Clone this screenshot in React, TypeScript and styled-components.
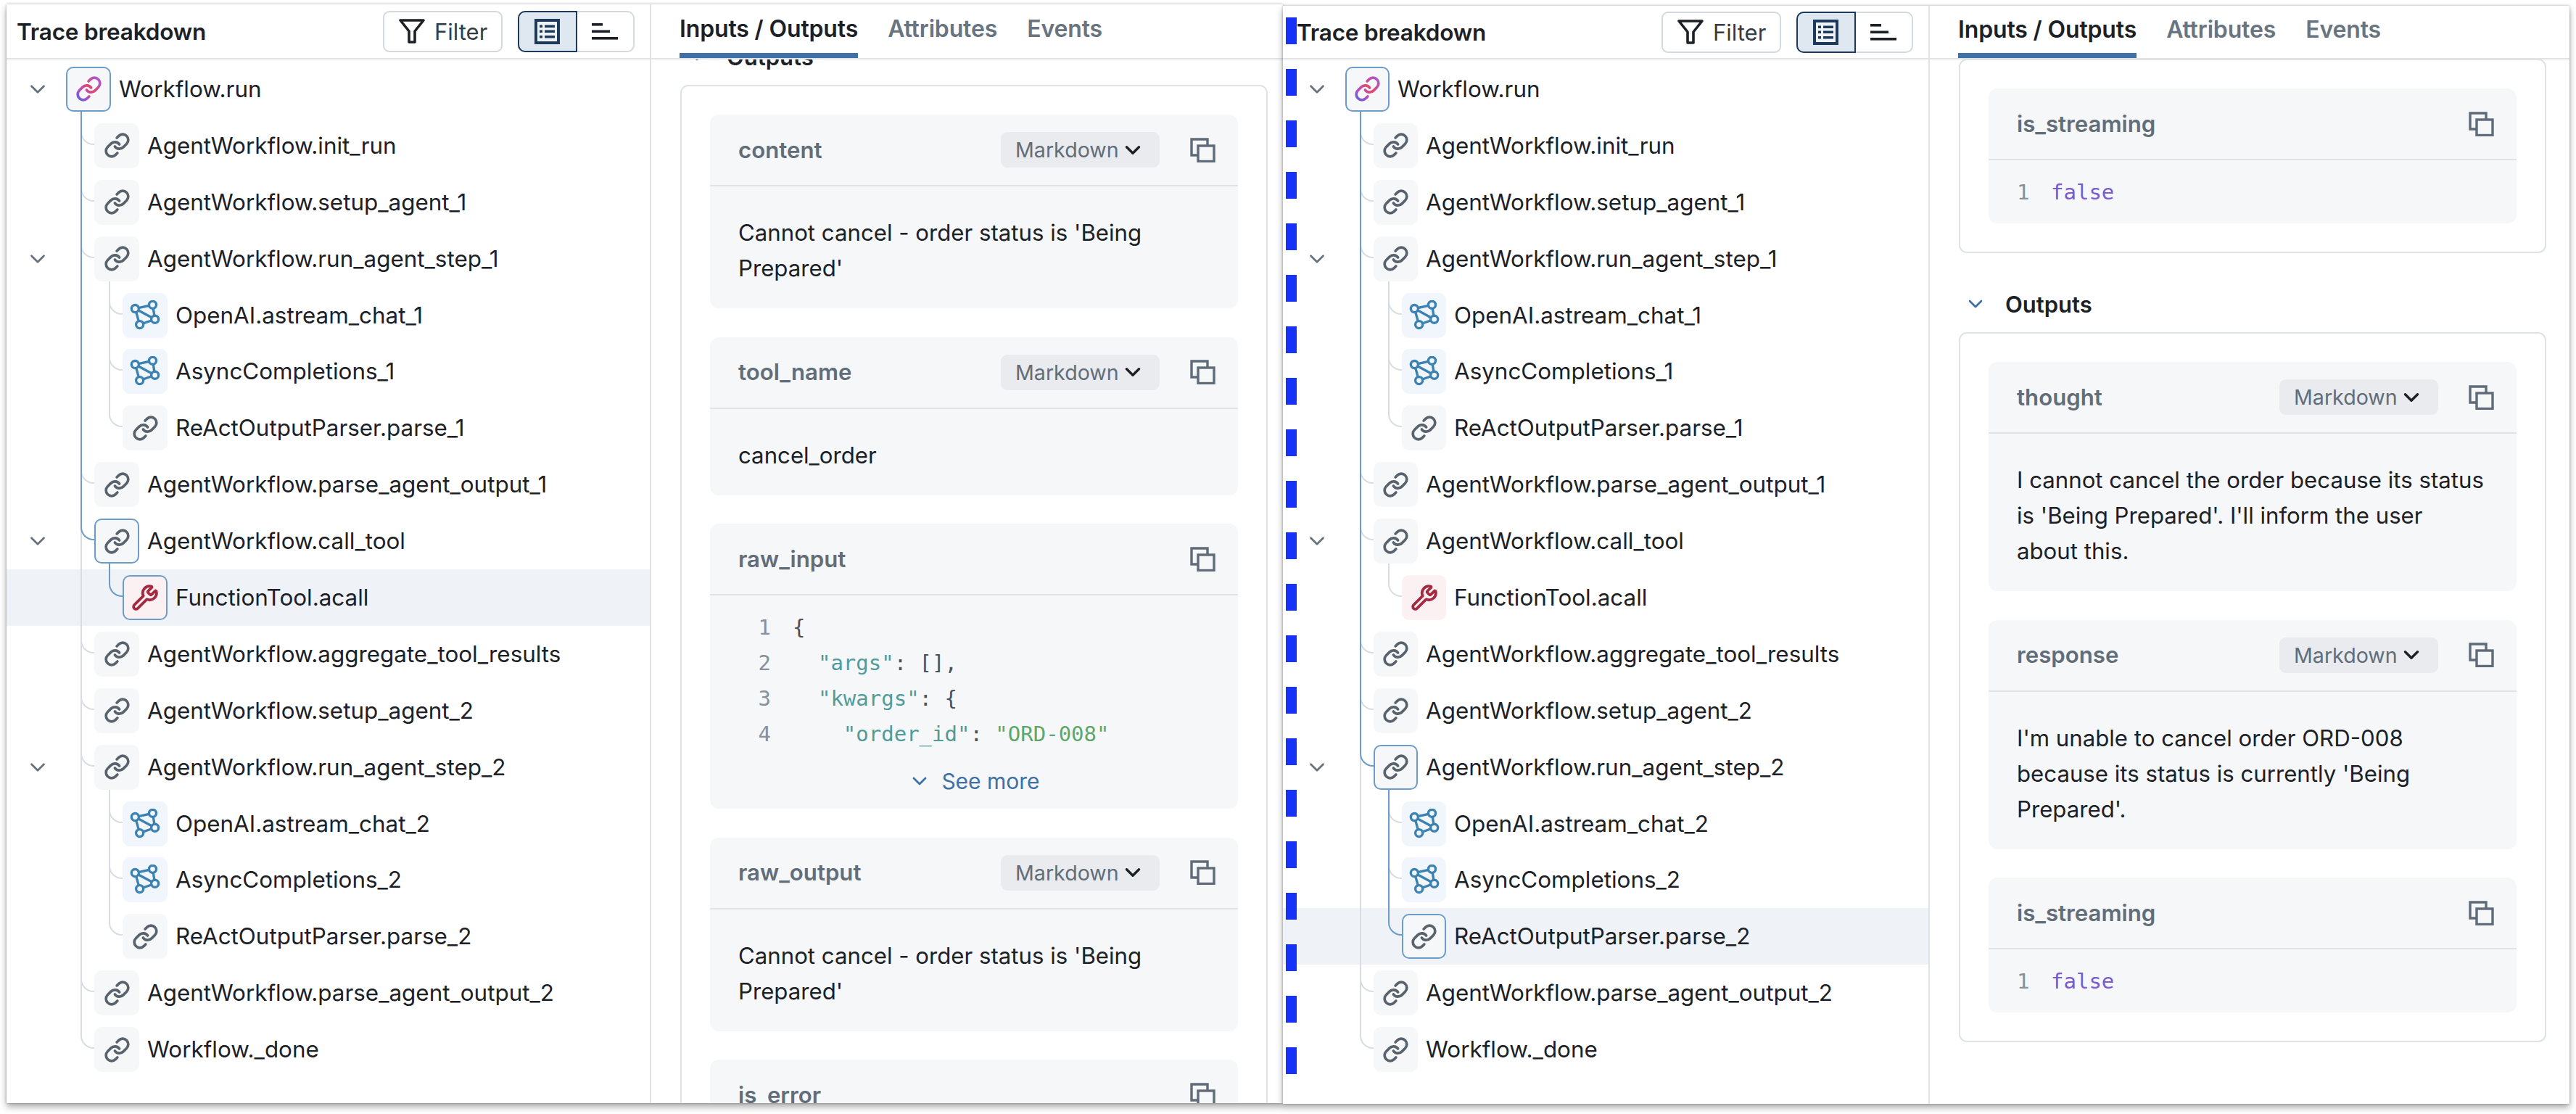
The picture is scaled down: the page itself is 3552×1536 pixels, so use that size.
import React from "react";
import styled, { createGlobalStyle } from "styled-components";
import { ChevronDown, Link as LinkIcon, Wrench } from "lucide-react";

const BLUE_LINE = "#6c9dca";
const GRAY_LINE = "#d9dde1";
const BORDER = "#dfe3e6";
const INK = "#1b2126";
const MUTED = "#616d79";
const FONT = `Inter, "Liberation Sans", sans-serif`;
const MONO = `"DejaVu Sans Mono", "Liberation Mono", monospace`;

const Global = createGlobalStyle`
  html, body { margin: 0; padding: 0; background: #fff; }
  body { font-family: ${FONT}; color: ${INK}; }
  * { box-sizing: border-box; }
`;

const Page = styled.div`
  position: relative;
  display: flex;
  align-items: flex-start;
  width: 3552px;
  height: 1536px;
  padding: 6px 0 0 9px;
  overflow: hidden;
  background: #fff;
`;

const DashOverlay = styled.div`
  position: absolute;
  z-index: 5;
  left: 1773px;
  top: 24px;
  width: 15px;
  height: 1459px;
  background: repeating-linear-gradient(to bottom, #1732f7 0, #1732f7 37px, transparent 37px, transparent 71px);
`;

const Window = styled.div<{ $w: number; $h: number; $top: number }>`
  position: relative;
  display: flex;
  flex: none;
  width: ${(p) => p.$w}px;
  height: ${(p) => p.$h}px;
  margin-top: ${(p) => p.$top}px;
  overflow: hidden;
  background: #fff;
  box-shadow: 0 0 3px rgba(0, 0, 0, 0.28), 0 5px 9px rgba(0, 0, 0, 0.34);
`;

const TracePane = styled.section<{ $w: number }>`
  flex: none;
  width: ${(p) => p.$w}px;
  border-right: 2px solid ${BORDER};
`;

const TraceHeader = styled.header<{ $h: number; $pad: number }>`
  display: flex;
  align-items: center;
  height: ${(p) => p.$h}px;
  padding: 0 21px 0 ${(p) => p.$pad}px;
  border-bottom: 2px solid ${BORDER};
  gap: 21px;
`;

const TraceTitle = styled.h2`
  flex: 1;
  margin: 0;
  font-size: 31.5px;
  font-weight: 600;
  letter-spacing: -0.2px;
`;

const FilterButton = styled.button`
  display: flex;
  align-items: center;
  gap: 13px;
  width: 165px;
  height: 57px;
  padding: 0 0 0 20px;
  border: 2px solid #d4d9de;
  border-radius: 9px;
  background: #fff;
  color: #333c44;
  font: 400 31px ${FONT};
`;

const Toggle = styled.div`
  display: flex;
  width: 161px;
  height: 57px;
  border: 2px solid #d4d9de;
  border-radius: 10px;
`;

const ToggleOption = styled.div<{ $on?: boolean }>`
  display: flex;
  align-items: center;
  justify-content: center;
  flex: 1;
  margin: ${(p) => (p.$on ? "-2px 0 -2px -2px" : "0")};
  border: ${(p) => (p.$on ? "2px solid #1d3a5c" : "none")};
  border-radius: ${(p) => (p.$on ? "10px 0 0 10px" : "0")};
  background: ${(p) => (p.$on ? "#dfe8f1" : "transparent")};
`;

const Tree = styled.div`
  padding-top: 2px;
`;

const Row = styled.div<{ $active: boolean }>`
  position: relative;
  display: flex;
  align-items: center;
  height: 77.9px;
  background: ${(p) => (p.$active ? "#eff2f7" : "transparent")};
`;

const CaretCell = styled.div<{ $w: number }>`
  display: flex;
  flex: none;
  align-items: center;
  justify-content: center;
  width: ${(p) => p.$w}px;
  padding-left: ${(p) => p.$w - 78}px;
  color: #66717c;
`;

const Indent = styled.div<{ $depth: number }>`
  flex: none;
  width: ${(p) => p.$depth * 39}px;
`;

const IconBox = styled.div<{ $kind: string; $on: boolean; $size: number }>`
  position: relative;
  z-index: 3;
  display: flex;
  flex: none;
  align-items: center;
  justify-content: center;
  width: ${(p) => p.$size}px;
  height: 62px;
  border: 2px solid ${(p) => (p.$on ? BLUE_LINE : "transparent")};
  border-radius: 10px;
  background: ${(p) => (p.$kind === "net" ? "#f0f6fb" : p.$kind === "tool" ? "#fbf0f2" : "#f5f7f9")};
  color: ${(p) => (p.$kind === "net" ? "#3b82b3" : p.$kind === "tool" ? "#a52a3f" : "#59636d")};
`;

const RowLabel = styled.span`
  margin-left: 11px;
  font-size: 31.4px;
  white-space: nowrap;
`;

const TrunkLine = styled.i<{ $x: number; $top: number; $blue: boolean }>`
  position: absolute;
  z-index: ${(p) => (p.$blue ? 2 : 1)};
  left: ${(p) => p.$x}px;
  top: ${(p) => p.$top}px;
  bottom: 0;
  width: 2px;
  background: ${(p) => (p.$blue ? BLUE_LINE : GRAY_LINE)};
`;

const Elbow = styled.i<{ $x: number; $blue: boolean }>`
  position: absolute;
  z-index: ${(p) => (p.$blue ? 2 : 1)};
  left: ${(p) => p.$x}px;
  top: 0;
  width: 20px;
  height: 38px;
  border-left: 2px solid ${(p) => (p.$blue ? BLUE_LINE : GRAY_LINE)};
  border-bottom: 2px solid ${(p) => (p.$blue ? BLUE_LINE : GRAY_LINE)};
  border-bottom-left-radius: 18px;
`;

const DetailPane = styled.section`
  flex: 1;
  min-width: 0;
  display: flex;
  flex-direction: column;
  height: 100%;
`;

const TabBar = styled.nav<{ $h: number }>`
  display: flex;
  flex: none;
  gap: 41px;
  height: ${(p) => p.$h}px;
  padding-left: 39px;
  border-bottom: 2px solid ${BORDER};
`;

const Tab = styled.div<{ $on?: boolean }>`
  display: flex;
  align-items: center;
  border-bottom: 7px solid ${(p) => (p.$on ? "#3f70a6" : "transparent")};
  color: ${(p) => (p.$on ? INK : "#68747f")};
  font-size: 32px;
  font-weight: 600;
  letter-spacing: -0.15px;
`;

const Scroller = styled.div`
  flex: 1;
  min-height: 0;
  overflow: hidden;
  padding-left: 40px;
`;

const SectionHead = styled.div<{ $first?: boolean; $gap?: number }>`
  display: flex;
  align-items: center;
  height: 78px;
  margin-top: ${(p) => (p.$first ? -43 : p.$gap ?? 31)}px;
  padding-left: 7px;
  font-size: 31px;
  font-weight: 600;
  color: ${INK};
`;

const SectionCaret = styled.span`
  display: flex;
  width: 57px;
  color: #3f70a6;
`;

const Card = styled.div<{ $offset?: number }>`
  display: flex;
  flex-direction: column;
  gap: 39.5px;
  width: 810px;
  margin-top: ${(p) => p.$offset ?? 0}px;
  padding: 39px 39px;
  border: 2px solid ${BORDER};
  border-radius: 11px;
`;

const Block = styled.article`
  flex: none;
  border-radius: 12px;
  background: #f5f7f9;
`;

const BlockHead = styled.div`
  display: flex;
  align-items: center;
  height: 99px;
  padding: 0 31px 0 39px;
  border-bottom: 2px solid ${BORDER};
`;

const BlockName = styled.h3`
  flex: 1;
  margin: 0;
  color: ${MUTED};
  font-size: 31.2px;
  font-weight: 600;
`;

const FormatPill = styled.div`
  display: flex;
  align-items: center;
  gap: 2px;
  width: 219px;
  height: 49px;
  margin-right: 42px;
  padding-left: 20px;
  border-radius: 9px;
  background: #e9ebee;
  color: ${MUTED};
  font-size: 28.6px;
`;

const PillCaret = styled.span`
  display: flex;
  color: #1b2126;
`;

const Prose = styled.p`
  margin: 0;
  padding: 40px 39px 30px;
  font-size: 31.2px;
  line-height: 49px;
  color: ${INK};
`;

const CodeArea = styled.div`
  padding: 20px 0 18px 39px;
  font: 400 29px/49px ${MONO};
`;

const CodeLine = styled.div`
  display: flex;
  white-space: pre;
`;

const LineNo = styled.span<{ $w: number }>`
  flex: none;
  width: ${(p) => p.$w}px;
  margin-right: 30px;
  color: #87919a;
  text-align: right;
`;

const Punct = styled.span`
  color: #4a535b;
`;
const Key = styled.span`
  color: #4f9c9a;
`;
const Str = styled.span`
  color: #5ea76a;
`;
const Bool = styled.span`
  color: #7a5ad0;
`;

const SeeMore = styled.div`
  display: flex;
  align-items: center;
  justify-content: center;
  gap: 14px;
  height: 49px;
  margin: -3px 0 14px;
  color: #3f70a6;
  font-size: 30px;
`;

type Kind = "link" | "net" | "tool" | "root";
type RowData = { label: string; depth: number; kind: Kind; open?: boolean };

const rows: RowData[] = [
  { label: "Workflow.run", depth: 0, kind: "root", open: true },
  { label: "AgentWorkflow.init_run", depth: 1, kind: "link" },
  { label: "AgentWorkflow.setup_agent_1", depth: 1, kind: "link" },
  { label: "AgentWorkflow.run_agent_step_1", depth: 1, kind: "link", open: true },
  { label: "OpenAI.astream_chat_1", depth: 2, kind: "net" },
  { label: "AsyncCompletions_1", depth: 2, kind: "net" },
  { label: "ReActOutputParser.parse_1", depth: 2, kind: "link" },
  { label: "AgentWorkflow.parse_agent_output_1", depth: 1, kind: "link" },
  { label: "AgentWorkflow.call_tool", depth: 1, kind: "link", open: true },
  { label: "FunctionTool.acall", depth: 2, kind: "tool" },
  { label: "AgentWorkflow.aggregate_tool_results", depth: 1, kind: "link" },
  { label: "AgentWorkflow.setup_agent_2", depth: 1, kind: "link" },
  { label: "AgentWorkflow.run_agent_step_2", depth: 1, kind: "link", open: true },
  { label: "OpenAI.astream_chat_2", depth: 2, kind: "net" },
  { label: "AsyncCompletions_2", depth: 2, kind: "net" },
  { label: "ReActOutputParser.parse_2", depth: 2, kind: "link" },
  { label: "AgentWorkflow.parse_agent_output_2", depth: 1, kind: "link" },
  { label: "Workflow._done", depth: 1, kind: "link" },
];

const lastSibling = (i: number) => {
  const d = rows[i].depth;
  const next = rows[i + 1];
  if (d === 2) return !next || next.depth < 2;
  return !rows.slice(i + 1).some((r) => r.depth === 1);
};

const parentOf = (i: number) => {
  for (let j = i - 1; j >= 0; j--) if (rows[j].depth < rows[i].depth) return j;
  return -1;
};

const NetworkGlyph = () => (
  <svg width="42" height="42" viewBox="-20 -20 40 40" fill="none" stroke="currentColor" strokeWidth="3.2">
    <path d="M-13-9 10-14 13 5-7 12Z M-13-9 13 5" />
    <circle cx="-13" cy="-9" r="4.8" fill="#f0f6fb" />
    <circle cx="10" cy="-14" r="4.8" fill="#f0f6fb" />
    <circle cx="13" cy="5" r="4.8" fill="#f0f6fb" />
    <circle cx="-7" cy="12" r="4.8" fill="#f0f6fb" />
  </svg>
);

const GradientLink = ({ id }: { id: string }) => (
  <svg width="37" height="37" viewBox="0 0 24 24" fill="none" stroke={`url(#${id})`} strokeWidth="2.4" strokeLinecap="round" strokeLinejoin="round">
    <defs>
      <linearGradient id={id} gradientUnits="userSpaceOnUse" x1="2" y1="22" x2="22" y2="2">
        <stop offset="0" stopColor="#5a63dd" />
        <stop offset="0.25" stopColor="#b04fc8" />
        <stop offset="0.55" stopColor="#e2486e" />
        <stop offset="1" stopColor="#a35ae0" />
      </linearGradient>
    </defs>
    <path d="M10 13a5 5 0 0 0 7.54.54l3-3a5 5 0 0 0-7.07-7.07l-1.72 1.71" />
    <path d="M14 11a5 5 0 0 0-7.54-.54l-3 3a5 5 0 0 0 7.07 7.07l1.71-1.71" />
  </svg>
);

const FunnelGlyph = () => (
  <svg width="36" height="36" viewBox="0 0 36 36" fill="none" stroke="#1b2126" strokeWidth="3.6" strokeLinejoin="round">
    <path d="M2 3h32L22 18v15h-8V18Z" />
  </svg>
);

const ListGlyph = () => (
  <svg width="35" height="35" viewBox="0 0 35 35">
    <rect x="2" y="2" width="31" height="31" fill="#eef3f8" stroke="#1d3a5c" strokeWidth="4" />
    <g fill="#1d3a5c">
      <rect x="7" y="8.5" width="4" height="3.5" />
      <rect x="7" y="15.5" width="4" height="3.5" />
      <rect x="7" y="23" width="4" height="3.5" />
      <rect x="14" y="8.5" width="14" height="3.5" />
      <rect x="14" y="15.5" width="14" height="3.5" />
      <rect x="14" y="23" width="14" height="3.5" />
    </g>
  </svg>
);

const GanttGlyph = () => (
  <svg width="36" height="26" viewBox="0 0 36 26" fill="#1b2126">
    <rect x="0" y="2" width="15" height="3.6" />
    <rect x="0" y="11.5" width="25" height="3.6" />
    <rect x="0" y="21" width="36" height="3.6" />
  </svg>
);

const CopyGlyph = () => (
  <svg width="35" height="34" viewBox="0 0 35 34" fill="none" stroke="#5f6b78" strokeWidth="3.4">
    <path d="M11 24H2V2h22v9" />
    <rect x="11" y="11" width="22" height="21.5" />
  </svg>
);

function TraceTree({ active, inset, box, id }: { active: number; inset: number; box: number; id: string }) {
  const path = new Set<number>();
  for (let k = active; k >= 0; k = parentOf(k)) path.add(k);
  const activeTop = rows[active].depth === 2 ? parentOf(active) : active;
  const trunk = (level: number) => inset + level * 39 + 20;
  return (
    <Tree>
      {rows.map((r, i) => {
        const parent = parentOf(i);
        return (
          <Row key={r.label} $active={i === active}>
            {r.depth >= 1 && !(r.depth === 1 && lastSibling(i)) && (
              <TrunkLine $x={trunk(0)} $top={0} $blue={i < activeTop} />
            )}
            {r.depth === 1 && <Elbow $x={trunk(0)} $blue={i === activeTop} />}
            {r.depth === 2 && !lastSibling(i) && (
              <TrunkLine $x={trunk(1)} $top={0} $blue={parent === activeTop && i < active} />
            )}
            {r.depth === 2 && <Elbow $x={trunk(1)} $blue={i === active} />}
            {r.open && (
              <TrunkLine $x={trunk(r.depth)} $top={70} $blue={path.has(i)} />
            )}
            <CaretCell $w={inset}>{r.open && <ChevronDown size={34} strokeWidth={1.9} />}</CaretCell>
            <Indent $depth={r.depth} />
            <IconBox $kind={r.kind} $on={path.has(i)} $size={box}>
              {r.kind === "root" && <GradientLink id={id} />}
              {r.kind === "link" && <LinkIcon size={37} strokeWidth={2.4} />}
              {r.kind === "net" && <NetworkGlyph />}
              {r.kind === "tool" && <Wrench size={38} strokeWidth={2.4} />}
            </IconBox>
            <RowLabel>{r.label}</RowLabel>
          </Row>
        );
      })}
    </Tree>
  );
}

function TraceSide(props: { w: number; headH: number; pad: number; active: number; inset: number; box: number; id: string }) {
  return (
    <TracePane $w={props.w}>
      <TraceHeader $h={props.headH} $pad={props.pad}>
        <TraceTitle>Trace breakdown</TraceTitle>
        <FilterButton>
          <FunnelGlyph />
          Filter
        </FilterButton>
        <Toggle>
          <ToggleOption $on>
            <ListGlyph />
          </ToggleOption>
          <ToggleOption>
            <GanttGlyph />
          </ToggleOption>
        </Toggle>
      </TraceHeader>
      <TraceTree active={props.active} inset={props.inset} box={props.box} id={props.id} />
    </TracePane>
  );
}

const Tabs = ({ h }: { h: number }) => (
  <TabBar $h={h}>
    <Tab $on>Inputs / Outputs</Tab>
    <Tab>Attributes</Tab>
    <Tab>Events</Tab>
  </TabBar>
);

function FieldHead({ name, pill }: { name: string; pill?: boolean }) {
  return (
    <BlockHead>
      <BlockName>{name}</BlockName>
      {pill && (
        <FormatPill>
          Markdown
          <PillCaret>
            <ChevronDown size={34} strokeWidth={2.4} />
          </PillCaret>
        </FormatPill>
      )}
      <CopyGlyph />
    </BlockHead>
  );
}

const TextField = ({ name, children }: { name: string; children: React.ReactNode }) => (
  <Block>
    <FieldHead name={name} pill />
    <Prose>{children}</Prose>
  </Block>
);

const FalseField = () => (
  <Block>
    <FieldHead name="is_streaming" />
    <CodeArea>
      <CodeLine>
        <LineNo $w={17}>1</LineNo>
        <Bool>false</Bool>
      </CodeLine>
    </CodeArea>
  </Block>
);

const Output = ({ first }: { first?: boolean }) => (
  <SectionHead $first={first}>
    <SectionCaret>
      <ChevronDown size={32} strokeWidth={2} />
    </SectionCaret>
    Outputs
  </SectionHead>
);

export default function App() {
  return (
    <>
      <Global />
      <Page>
        <Window $w={1760} $h={1515} $top={0}>
          <TraceSide w={889} headH={76} pad={14} active={9} inset={82} box={62} id="rootA" />
          <DetailPane>
            <Tabs h={76} />
            <Scroller>
              <Output first />
              <Card>
                <TextField name="content">Cannot cancel - order status is 'Being Prepared'</TextField>
                <TextField name="tool_name">cancel_order</TextField>
                <Block>
                  <FieldHead name="raw_input" />
                  <CodeArea>
                    <CodeLine>
                      <LineNo $w={45}>1</LineNo>
                      <Punct>{"{"}</Punct>
                    </CodeLine>
                    <CodeLine>
                      <LineNo $w={45}>2</LineNo>
                      <Key>{'  "args"'}</Key>
                      <Punct>: [],</Punct>
                    </CodeLine>
                    <CodeLine>
                      <LineNo $w={45}>3</LineNo>
                      <Key>{'  "kwargs"'}</Key>
                      <Punct>{": {"}</Punct>
                    </CodeLine>
                    <CodeLine>
                      <LineNo $w={45}>4</LineNo>
                      <Key>{'    "order_id"'}</Key>
                      <Punct>: </Punct>
                      <Str>"ORD-008"</Str>
                    </CodeLine>
                  </CodeArea>
                  <SeeMore>
                    <ChevronDown size={32} strokeWidth={2} />
                    See more
                  </SeeMore>
                </Block>
                <TextField name="raw_output">Cannot cancel - order status is 'Being Prepared'</TextField>
                <Block>
                  <FieldHead name="is_error" />
                </Block>
              </Card>
            </Scroller>
          </DetailPane>
        </Window>
        <Window $w={1774} $h={1514} $top={2}>
          <TraceSide w={892} headH={74} pad={19} active={15} inset={86} box={61} id="rootB" />
          <DetailPane>
            <Tabs h={74} />
            <Scroller>
              <Card $offset={-1}>
                <FalseField />
              </Card>
              <Output />
              <Card>
                <TextField name="thought">
                  I cannot cancel the order because its status
                  <br />
                  is 'Being Prepared'. I'll inform the user
                  <br />
                  about this.
                </TextField>
                <TextField name="response">I'm unable to cancel order ORD-008 because its status is currently 'Being Prepared'.</TextField>
                <FalseField />
              </Card>
            </Scroller>
          </DetailPane>
        </Window>
        <DashOverlay />
      </Page>
    </>
  );
}
